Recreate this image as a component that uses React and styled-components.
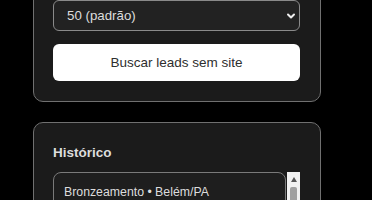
import styled, { createGlobalStyle } from "styled-components";

const GlobalStyle = createGlobalStyle`
  html, body {
    margin: 0;
    background: #000;
    font-family: "Liberation Sans", Arial, sans-serif;
  }
`;

const Page = styled.div`
  display: flex;
  flex-direction: column;
  gap: 20px;
  width: 288px;
  margin: -21px 0 0 33px;
`;

const Card = styled.section`
  display: flex;
  flex-direction: column;
  padding: 20px 20px 20px 19px;
  background: #1b1b1b;
  border: 1px solid #707070;
  border-radius: 10px;
`;

const chevron = `url("data:image/svg+xml,%3Csvg xmlns='http://www.w3.org/2000/svg' width='10' height='8' viewBox='0 0 10 8'%3E%3Cpath d='M2 2.5l3 3 3-3' fill='none' stroke='%23eee' stroke-width='2' stroke-linecap='round' stroke-linejoin='round'/%3E%3C/svg%3E")`;

const Select = styled.select`
  appearance: none;
  height: 31px;
  padding: 0 13px;
  background: #222 ${chevron} no-repeat right 3px center;
  border: 1px solid #8a8a8a;
  border-radius: 6px;
  color: #ddd;
  font: 13.3px "Liberation Sans", Arial, sans-serif;
`;

const Button = styled.button`
  height: 37px;
  margin-top: 13px;
  background: #fff;
  border: none;
  border-radius: 6px;
  color: #2e2e2e;
  font: 13.5px "Liberation Sans", Arial, sans-serif;
`;

const Title = styled.h3`
  margin: 2px 0 0;
  color: #ddd;
  font-size: 13.5px;
  font-weight: bold;
  line-height: 16px;
`;

const Scroller = styled.div`
  display: flex;
  gap: 1px;
  height: 150px;
  margin-top: 11px;
  overflow: hidden;
`;

const List = styled.div`
  flex: 1;
  display: flex;
  flex-direction: column;
  gap: 8px;
  min-width: 0;
`;

const Scrollbar = styled.div`
  flex: none;
  display: flex;
  flex-direction: column;
  align-items: center;
  width: 13px;
  padding-top: 5px;
  background: #f1f1f1;
`;

const Arrow = styled.div`
  width: 0;
  height: 0;
  border-left: 3.5px solid transparent;
  border-right: 3.5px solid transparent;
  border-bottom: 5px solid #555;
`;

const Thumb = styled.div`
  width: 7px;
  height: 60px;
  margin-top: 5px;
  background: #a0a0a0;
  border-radius: 2px;
`;

const Item = styled.div`
  flex: none;
  display: flex;
  flex-direction: column;
  align-items: flex-start;
  gap: 2px;
  padding: 12px 10px 10px;
  background: #1e1e1e;
  border: 1px solid #7a7a7a;
  border-radius: 8px;
  color: #ddd;
  font-size: 12.3px;
  line-height: 14px;
`;

const Tag = styled.span`
  padding: 1px 6px;
  background: ${(p) => (p.$ok ? "#1d6b34" : "#444")};
  border-radius: 4px;
  color: #dff5e4;
  font-size: 10px;
`;

const history = [
  { label: "Bronzeamento • Belém/PA", tag: "12 leads" },
  { label: "Barbearia • Manaus/AM", tag: "8 leads" },
  { label: "Pet shop • Recife/PE", tag: "15 leads" },
];

export default function App() {
  return (
    <>
      <GlobalStyle />
      <Page>
        <Card>
          <Select defaultValue="50">
            <option value="20">20</option>
            <option value="50">50 (padrão)</option>
            <option value="100">100</option>
          </Select>
          <Button>Buscar leads sem site</Button>
        </Card>
        <Card>
          <Title>Histórico</Title>
          <Scroller>
            <List>
              {history.map((h) => (
                <Item key={h.label}>
                  {h.label}
                  <Tag $ok>{h.tag}</Tag>
                </Item>
              ))}
            </List>
            <Scrollbar>
              <Arrow />
              <Thumb />
            </Scrollbar>
          </Scroller>
        </Card>
      </Page>
    </>
  );
}
